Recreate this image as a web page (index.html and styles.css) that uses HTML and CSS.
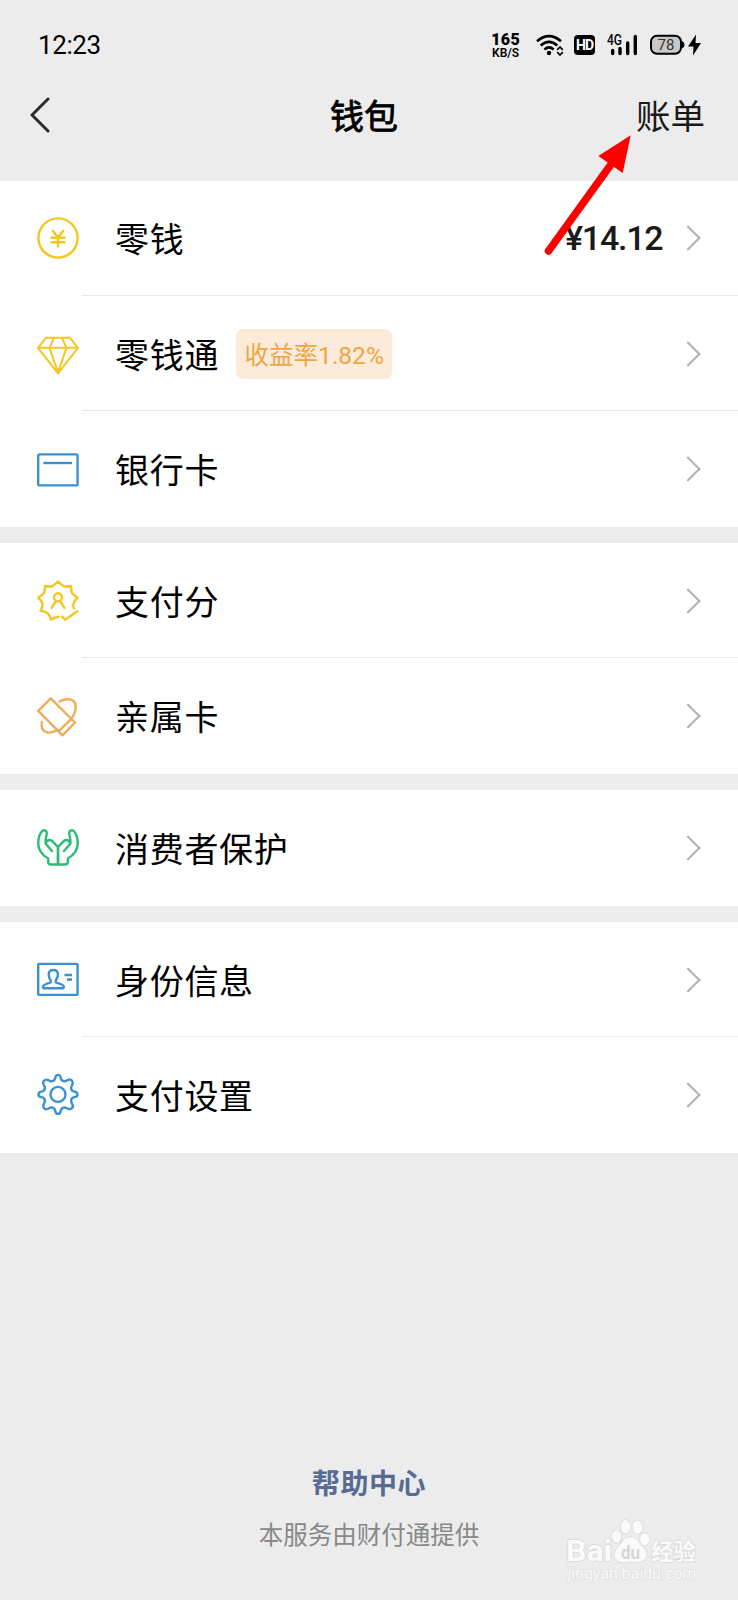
FILE: index.html
```html
<!DOCTYPE html>
<html lang="zh-CN">
<head>
    <meta charset="UTF-8">
    <meta name="viewport" content="width=device-width, initial-scale=1.0">
    <title>钱包</title>
    <link rel="stylesheet" href="styles.css">
</head>
<body>
    <div class="phone">
        <div class="status-bar">
            <span class="time">12:23</span>
            <div class="status-icons">
                <div class="speed"><b>165</b><span>KB/S</span></div>
                <svg class="wifi" width="28" height="22" viewBox="0 0 28 22">
                    <g fill="none" stroke="#000" stroke-width="2.6">
                        <path d="M1 7.2Q13 -3 25 7.2"/>
                        <path d="M4.7 11.4Q13 4.4 21.3 11.4"/>
                        <path d="M8.4 15.4Q13 11.4 17.6 15.4"/>
                    </g>
                    <circle cx="13" cy="19" r="2.2"/>
                    <path d="M21.2 15.8L24 12.9L26.8 15.8M21.2 18.2L24 21L26.8 18.2" fill="none" stroke="#000" stroke-width="1.7"/>
                </svg>
                <span class="hd">HD</span>
                <svg class="signal" width="31" height="22" viewBox="0 0 31 22">
                    <text x="0" y="11.2" class="net" textLength="15" lengthAdjust="spacingAndGlyphs">4G</text>
                    <path d="M5.7 16.5V19.5M13 14.5V19.5M20.7 9V19.5M28.3 2.5V19.5" stroke="#000" stroke-width="3.4" stroke-linecap="round"/>
                </svg>
                <svg class="battery" width="52" height="22" viewBox="0 0 52 22">
                    <rect x="1" y="1.8" width="30" height="18" rx="6" fill="#c8c8c8" stroke="#000" stroke-width="2"/>
                    <path d="M32 7Q34.5 8 34.5 10.8T32 14.6Z"/>
                    <text x="16" y="16.4" text-anchor="middle" class="level">78</text>
                    <path d="M46 .5L38 12.5H43.5L43 21.5L51 9H45.5Z"/>
                </svg>
            </div>
        </div>

        <header class="navbar">
            <svg class="back" width="20" height="36" viewBox="0 0 20 36">
                <path d="M18 2L2 18L18 34" fill="none" stroke="#2b2b2b" stroke-width="3" stroke-linecap="round"/>
            </svg>
            <h1>钱包</h1>
            <a class="bill">账单</a>
        </header>

        <main>
            <section class="group">
                <div class="row">
                    <svg class="icon yellow" viewBox="0 0 42 42">
                        <circle cx="21" cy="21" r="19.6"/>
                        <path d="M16 14L21 20.5L26 14M14.5 20.8H27.5M14.5 25.2H27.5M21 20.5V29.5"/>
                    </svg>
                    <div class="cell"><span class="label">零钱</span><span class="amount">¥14.12</span><i class="chevron"></i></div>
                </div>
                <div class="row">
                    <svg class="icon yellow thin" viewBox="0 0 42 42">
                        <path d="M9 4.8H33L41 14.8L21 40.3L1 14.8ZM1 14.8H41M17 4.8L12.5 14.8L21 39.3L29.5 14.8L25 4.8"/>
                    </svg>
                    <div class="cell"><span class="label">零钱通</span><span class="tag">收益率1.82%</span><i class="chevron"></i></div>
                </div>
                <div class="row">
                    <svg class="icon blue" viewBox="0 0 42 42">
                        <rect x="1.2" y="6.4" width="39.4" height="31" rx="1.5"/>
                        <path d="M6.3 15H35" stroke-linecap="butt"/>
                    </svg>
                    <div class="cell"><span class="label">银行卡</span><i class="chevron"></i></div>
                </div>
            </section>

            <section class="group">
                <div class="row">
                    <svg class="icon yellow" viewBox="0 0 42 42">
                        <path d="M37 28.5Q35.8 26 36.3 24.3Q37.2 20.5 40.5 17.8Q37.5 15.5 35 13.2Q34 9.5 34 6Q30 6.8 26.8 6.3Q23.5 4.3 21 1.5Q18.5 4.3 15.2 6.3Q12 6.8 8 6Q8 9.5 7 13.2Q4.5 15.5 1.3 17.8Q4.8 20.5 5.7 24.3Q5.5 27.5 3.6 30.8Q7.5 31.3 10.8 33.2Q13 36 14 39.6Q17.5 37.5 21.5 36.8"/>
                        <path d="M25 36.5L28 39.8L40.5 31.2"/>
                        <circle cx="21" cy="17.3" r="4"/>
                        <path d="M14.5 27.8L19 21M27.5 27.8L23 21"/>
                    </svg>
                    <div class="cell"><span class="label">支付分</span><i class="chevron"></i></div>
                </div>
                <div class="row">
                    <svg class="icon orange" viewBox="0 0 42 42">
                        <path d="M13.7 3.3L38 27.5L25.5 40.3L1.3 15.8ZM21.5 36.5L34.5 23.7"/>
                        <path d="M22.5 6.5C30 2.5 37 4 38.5 9C39.8 15 37 20 34.5 23.7M4.8 27C4 32 5.5 36.5 10.5 37.5C15 38 18 36.5 20.5 35"/>
                    </svg>
                    <div class="cell"><span class="label">亲属卡</span><i class="chevron"></i></div>
                </div>
            </section>

            <section class="group">
                <div class="row">
                    <svg class="icon green" viewBox="0 0 42 42">
                        <path id="hand" d="M21 20V37.5H14Q11.2 37.5 11.2 35V31.5Q1.2 26 1.2 16Q1.5 8 5 4.3Q7 2.3 9 4Q10.3 5.2 9.5 8Q8.3 12 8.5 16.5Q9.8 12.8 13 13Q14.5 13.2 15.8 14.6L21 20M8.5 16.5L15 24"/>
                        <use href="#hand" transform="translate(42 0) scale(-1 1)"/>
                    </svg>
                    <div class="cell"><span class="label">消费者保护</span><i class="chevron"></i></div>
                </div>
            </section>

            <section class="group">
                <div class="row">
                    <svg class="icon blue" viewBox="0 0 42 42">
                        <rect x="1.2" y="4.9" width="39.4" height="31" rx="1"/>
                        <path d="M13.7 21.5Q11.7 18.5 11.7 15.5Q11.7 11 16.3 11T20.9 15.5Q20.9 18.5 18.8 21.5V23.3Q26.5 25.5 26.8 27.5Q27 29.3 25.5 29.3H7.5Q5.6 29.3 5.9 27.5Q6.5 25.5 13.7 23.3Z"/>
                        <path d="M27.5 16H35M30 20.5H35" stroke-linecap="butt"/>
                    </svg>
                    <div class="cell"><span class="label">身份信息</span><i class="chevron"></i></div>
                </div>
                <div class="row">
                    <svg class="icon blue" viewBox="0 0 42 42">
                        <g transform="translate(21 20.4)">
                            <path d="M-2.5 -17.5Q-2 -19.5 0 -19.5T2.5 -17.5L3.3 -14.8Q4.7 -12.7 7.5 -13.2L10.5 -14.6Q12.5 -15.4 13.8 -13.8T14.6 -10.5L13.2 -7.5Q12.7 -4.7 14.8 -3.3L17.5 -2.5Q19.5 -2 19.5 0T17.5 2.5L14.8 3.3Q12.7 4.7 13.2 7.5L14.6 10.5Q15.4 12.5 13.8 13.8T10.5 14.6L7.5 13.2Q4.7 12.7 3.3 14.8L2.5 17.5Q2 19.5 0 19.5T-2.5 17.5L-3.3 14.8Q-4.7 12.7 -7.5 13.2L-10.5 14.6Q-12.5 15.4 -13.8 13.8T-14.6 10.5L-13.2 7.5Q-12.7 4.7 -14.8 3.3L-17.5 2.5Q-19.5 2 -19.5 0T-17.5 -2.5L-14.8 -3.3Q-12.7 -4.7 -13.2 -7.5L-14.6 -10.5Q-15.4 -12.5 -13.8 -13.8T-10.5 -14.6L-7.5 -13.2Q-4.7 -12.7 -3.3 -14.8Z"/>
                            <circle r="7.5"/>
                        </g>
                    </svg>
                    <div class="cell"><span class="label">支付设置</span><i class="chevron"></i></div>
                </div>
            </section>
        </main>

        <footer>
            <a class="help">帮助中心</a>
            <p>本服务由财付通提供</p>
        </footer>

        <svg class="arrow" width="96" height="126" viewBox="0 0 96 126">
            <path d="M8.5 121L72 33" stroke="#f00" stroke-width="7.5" stroke-linecap="round"/>
            <path d="M90.7 5.3L58.3 26L82.7 43Z" fill="#f00"/>
        </svg>

        <svg class="watermark" width="140" height="70" viewBox="0 0 140 70">
            <g class="wm-shape">
                <text x="6" y="45.5" class="wm-logo" textLength="46" lengthAdjust="spacingAndGlyphs">Bai</text>
                <ellipse cx="56.5" cy="21.5" rx="4.7" ry="6.3"/>
                <ellipse cx="65.8" cy="11.7" rx="4.9" ry="6.7"/>
                <ellipse cx="77.5" cy="12.3" rx="4.9" ry="6.7"/>
                <ellipse cx="84.8" cy="24.3" rx="4.7" ry="6.3"/>
                <path d="M70 22C76 22 79 28 83 32C89 38 87 46 79 47C75 47 73 46.5 70.5 46.5C67 46.5 65 47.5 61 47C53 46 53 38 58 32C62 28 64 22 70 22Z"/>
                <text x="91" y="44.5" class="wm-cn" textLength="45" lengthAdjust="spacingAndGlyphs">经验</text>
                <text x="7.5" y="64" class="wm-url" textLength="129" lengthAdjust="spacingAndGlyphs">jingyan.baidu.com</text>
            </g>
            <text x="61" y="43.5" class="wm-du" textLength="19" lengthAdjust="spacingAndGlyphs">du</text>
        </svg>
    </div>
</body>
</html>
```
FILE: styles.css
```css
* {
    box-sizing: border-box;
}

body {
    margin: 0;
    background-color: #ececec;
    color: #000;
    font-family: Roboto, "Noto Sans CJK SC", sans-serif;
}

.phone {
    position: relative;
    display: flex;
    flex-direction: column;
    height: 1600px;
    overflow: hidden;
}

.status-bar {
    display: flex;
    justify-content: space-between;
    align-items: center;
    height: 90px;
    padding: 0 36px 0 38px;
}

.time {
    font-size: 26px;
    letter-spacing: -0.4px;
}

.status-icons {
    display: flex;
    align-items: center;
}

.speed {
    display: flex;
    flex-direction: column;
    align-items: center;
    padding-top: 2px;
    font-weight: 600;
    font-size: 12px;
    line-height: 12px;
}

.speed b {
    font-size: 16px;
    line-height: 14px;
    letter-spacing: 0.3px;
}

.wifi {
    margin-left: 16px;
}

.hd {
    width: 21px;
    height: 20px;
    margin-left: 10px;
    border-radius: 4px;
    background-color: #000;
    color: #fff;
    font-size: 14px;
    font-weight: 700;
    line-height: 21px;
    text-align: center;
    letter-spacing: -1px;
}

.signal {
    margin-left: 12px;
    overflow: visible;
}

.net {
    font-size: 14px;
    font-weight: 500;
}

.battery {
    margin-left: 12px;
}

.level {
    font-size: 15px;
    fill: #333;
}

.navbar {
    display: grid;
    grid-template-columns: 1fr auto 1fr;
    align-items: center;
    height: 90.5px;
    padding: 0 33px 40px 30px;
}

.navbar h1 {
    margin: 4px 7px 0 0;
    font-size: 34px;
    font-weight: 400;
    line-height: 46px;
    -webkit-text-stroke: 0.8px #000;
}

.bill {
    justify-self: end;
    margin-top: 4px;
    color: #1a1a1a;
    font-size: 34.5px;
    line-height: 46px;
}

.group {
    margin-bottom: 16.4px;
    background-color: #fff;
}

.row {
    display: flex;
    align-items: center;
    height: 115.4px;
    padding-left: 36.5px;
}

.icon {
    flex: none;
    width: 42px;
    height: 42px;
    fill: none;
    stroke-width: 2.4;
    stroke-linecap: round;
    stroke-linejoin: round;
    overflow: visible;
}

.thin {
    stroke-width: 2;
}

.yellow {
    stroke: #f3c71f;
}

.blue {
    stroke: #3b92d0;
}

.orange {
    stroke: #efab58;
}

.green {
    stroke: #2abd76;
}

.cell {
    position: relative;
    display: flex;
    flex: 1;
    align-items: center;
    height: 100%;
    padding: 0 41.5px 0 36.5px;
}

/* divider starts a little right of the icon */
.row:not(:last-child) .cell::after {
    content: "";
    position: absolute;
    left: 3.5px;
    right: 0;
    bottom: 0;
    height: 1px;
    background-color: #e9e9e9;
}

.label {
    padding-top: 4px;
    font-size: 34px;
    letter-spacing: 0.7px;
    line-height: 50px;
}

.tag {
    height: 50px;
    margin: 1px 0 0 17px;
    padding: 0 8.5px;
    border-radius: 7px;
    background-color: #fdebd9;
    color: #eea546;
    font-size: 24.5px;
    line-height: 53px;
}

.amount {
    margin-left: auto;
    color: #1a1a1a;
    font-size: 34px;
    font-weight: 500;
    letter-spacing: -1.2px;
}

.chevron {
    width: 18px;
    height: 18px;
    margin-left: auto;
    border-top: 2.5px solid #b2b2b2;
    border-right: 2.5px solid #b2b2b2;
    transform: rotate(45deg);
}

.amount + .chevron {
    margin-left: 16px;
}

footer {
    margin-top: auto;
    padding-bottom: 46px;
    text-align: center;
}

.help {
    color: #576b95;
    font-size: 28px;
    font-weight: 700;
    letter-spacing: 0.6px;
    line-height: 40px;
}

footer p {
    margin: 13px 0 0;
    color: #888;
    font-size: 24.5px;
    line-height: 36px;
}

.arrow {
    position: absolute;
    left: 540px;
    top: 130px;
}

.watermark {
    position: absolute;
    left: 560px;
    top: 1515px;
}

.wm-shape {
    fill: #fafafa;
    stroke: #dadada;
    stroke-width: 1.6;
    paint-order: stroke;
}

.wm-logo {
    font-size: 29px;
    font-weight: 700;
}

.wm-cn {
    font-size: 23px;
    font-weight: 700;
}

.wm-url {
    font-size: 16px;
    stroke-width: 1.2;
}

.wm-du {
    font-size: 19px;
    font-weight: 700;
    fill: #d6d6d6;
}
```
